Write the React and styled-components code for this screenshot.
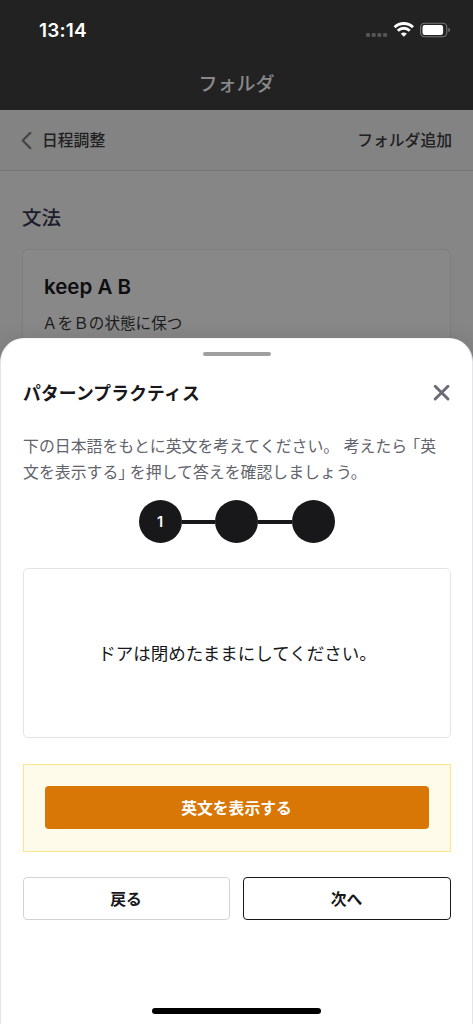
import React from 'react';
import styled, { createGlobalStyle } from 'styled-components';

const steps = [1, 2, 3];
const currentStep = 1;

const GlobalStyle = createGlobalStyle`
  * {
    box-sizing: border-box;
  }

  body {
    margin: 0;
    background: #868686;
    color: #18181b;
    font-family: Inter, "Noto Sans CJK JP", sans-serif;
  }
`;

const Screen = styled.div`
  position: relative;
  height: 1024px;
  overflow: hidden;
`;

const TopBar = styled.header`
  height: 110px;
  background: #222;
`;

const StatusBar = styled.div`
  display: flex;
  align-items: center;
  justify-content: space-between;
  height: 60px;
  padding: 0 21px 0 39px;
`;

const Time = styled.span`
  padding-top: 2px;
  color: #fff;
  font-size: 19px;
  font-weight: 600;
  line-height: 24px;
  letter-spacing: 0.2px;
`;

const Title = styled.h1`
  margin: 12px 0 0;
  color: #898989;
  font-size: 19px;
  font-weight: 500;
  line-height: 26px;
  text-align: center;
`;

const Nav = styled.nav`
  display: flex;
  align-items: center;
  justify-content: space-between;
  height: 61px;
  padding: 2px 21px 0;
  background: #838383;
  border-bottom: 1px solid #777;
`;

const NavButton = styled.a`
  display: flex;
  align-items: center;
  gap: 10px;
  color: #202022;
  font-size: 15.8px;
  font-weight: 500;
  line-height: 24px;
`;

const Content = styled.main`
  padding: 34px 22px 0;
`;

const SectionTitle = styled.h2`
  margin: 0 0 18px;
  color: #1c1c2b;
  font-size: 19.5px;
  font-weight: 500;
  line-height: 26px;
`;

const PhraseCard = styled.div`
  height: 160px;
  padding: 24px 21px;
  background: #888;
  border: 1px solid #7e7e7e;
  border-radius: 6px;
`;

const Phrase = styled.div`
  color: #0e0e10;
  font-size: 20.5px;
  font-weight: 600;
  line-height: 26px;
`;

const Meaning = styled.div`
  margin: 10px 0 0 -2px;
  color: #1d1d1f;
  font-family: "Noto Sans CJK JP", sans-serif;
  font-size: 15.6px;
  line-height: 24px;
`;

const Sheet = styled.section`
  position: absolute;
  left: 0;
  right: 0;
  bottom: 0;
  height: 686px;
  padding: 13px 21px 0 22px;
  background: #fff;
  border: 1px solid #e4e4e7;
  border-top-color: #f4f4f5;
  border-bottom: 0;
  border-radius: 24px 24px 0 0;
  box-shadow: 0 0 20px rgba(0, 0, 0, 0.12);
`;

const Handle = styled.div`
  width: 68px;
  height: 4px;
  margin: 0 auto;
  background: #a0a0a0;
  border-radius: 2px;
`;

const SheetHeader = styled.div`
  display: flex;
  align-items: center;
  justify-content: space-between;
  height: 26px;
  margin-top: 24px;
`;

const SheetTitle = styled.h3`
  margin: 2px 0 0;
  font-size: 17.8px;
  font-weight: 700;
  line-height: 26px;
  letter-spacing: 0.15px;
`;

const Description = styled.p`
  margin: 28px 0 0;
  color: #63636b;
  font-size: 15.9px;
  line-height: 25.5px;
  white-space: nowrap;
`;

/* half-width bracket with a little air on its outer side */
const Bracket = styled.span`
  margin-left: ${(props) => (props.$open ? '5px' : '0')};
  margin-right: ${(props) => (props.$open ? '0' : '3.5px')};
  font-feature-settings: "halt";
`;

const Stepper = styled.div`
  display: flex;
  align-items: center;
  justify-content: center;
  margin-top: 15px;
  padding-right: 1px;
`;

const Step = styled.div`
  display: flex;
  align-items: center;
  justify-content: center;
  width: 43px;
  height: 43px;
  color: #fff;
  background: #18181b;
  border-radius: 50%;
  font-size: 14.5px;
  font-weight: 600;
`;

const StepLine = styled.div`
  width: 33.5px;
  height: 4px;
  background: #18181b;
`;

const QuestionBox = styled.div`
  display: flex;
  align-items: center;
  justify-content: center;
  height: 170px;
  margin-top: 25px;
  padding: 0 0 1px 1px;
  border: 1px solid #e4e4e7;
  border-radius: 5px;
  font-size: 17.5px;
`;

const AnswerPanel = styled.div`
  height: 88px;
  margin-top: 26px;
  padding: 21px;
  background: #fffbeb;
  border: 1px solid #fde68a;
`;

const Button = styled.button`
  width: 100%;
  height: 43px;
  padding: 0 1px 0 0;
  color: ${(props) => props.$color || '#18181b'};
  background: ${(props) => props.$background || '#fff'};
  border: ${(props) => (props.$border ? `1px solid ${props.$border}` : '0')};
  border-radius: 4px;
  font-family: inherit;
  font-size: 15.8px;
  font-weight: 700;
`;

const Actions = styled.div`
  display: grid;
  grid-template-columns: 207px 1fr;
  gap: 13px;
  margin-top: 25px;
`;

const HomeIndicator = styled.div`
  position: absolute;
  bottom: 10px;
  left: 151px;
  width: 169px;
  height: 6px;
  background: #000;
  border-radius: 3px;
`;

const StatusIcons = () => (
  <svg width="86" height="18" viewBox="0 0 86 18" fill="none">
    <g fill="#555">
      <rect x="0" y="12" width="4" height="4" rx="1.3" />
      <rect x="5.7" y="12" width="4" height="4" rx="1.3" />
      <rect x="11.4" y="12" width="4" height="4" rx="1.3" />
      <rect x="17.1" y="12" width="4" height="4" rx="1.3" />
    </g>
    <g stroke="#fff" strokeWidth="2.9">
      <path d="M28.6 6.2C33.9 1.3 41.7 1.3 47 6.2" />
      <path d="M31.8 9.7C35.3 6.5 40.3 6.5 43.8 9.7" />
    </g>
    <path d="M34.8 12.7C36.5 11.2 39.1 11.2 40.8 12.7L37.8 15.7Z" fill="#fff" />
    <rect x="54.6" y="2.2" width="26.2" height="13.6" rx="4" stroke="#777" strokeWidth="1.1" />
    <rect x="56.5" y="4.1" width="20.6" height="9.9" rx="2.3" fill="#fff" />
    <path d="M82.4 6.7C84.6 7.5 84.6 10.3 82.4 11.1Z" fill="#777" />
  </svg>
);

const BackIcon = () => (
  <svg width="11" height="18" viewBox="0 0 11 18" fill="none">
    <path d="M9.3 0.9L1.7 8.5L9.3 16.1" stroke="#464649" strokeWidth="2.2" strokeLinecap="round" strokeLinejoin="round" />
  </svg>
);

const CloseIcon = () => (
  <svg width="18" height="18" viewBox="0 0 18 18" fill="none">
    <path d="M2.2 2.2L15 15M15 2.2L2.2 15" stroke="#6b6b76" strokeWidth="2.9" strokeLinecap="round" />
  </svg>
);

const App = () => (
  <Screen>
    <GlobalStyle />
    <TopBar>
      <StatusBar>
        <Time>13:14</Time>
        <StatusIcons />
      </StatusBar>
      <Title>フォルダ</Title>
    </TopBar>
    <Nav>
      <NavButton>
        <BackIcon />
        日程調整
      </NavButton>
      <NavButton>フォルダ追加</NavButton>
    </Nav>
    <Content>
      <SectionTitle>文法</SectionTitle>
      <PhraseCard>
        <Phrase>keep A B</Phrase>
        <Meaning>ＡをＢの状態に保つ</Meaning>
      </PhraseCard>
    </Content>

    <Sheet>
      <Handle />
      <SheetHeader>
        <SheetTitle>パターンプラクティス</SheetTitle>
        <CloseIcon />
      </SheetHeader>
      <Description>
        下の日本語をもとに英文を考えてください。 考えたら<Bracket $open>「</Bracket>英
        <br />
        文を表示する<Bracket>」</Bracket>を押して答えを確認しましょう。
      </Description>
      <Stepper>
        {steps.map((step) => (
          <React.Fragment key={step}>
            {step > 1 && <StepLine />}
            <Step>{step === currentStep && step}</Step>
          </React.Fragment>
        ))}
      </Stepper>
      <QuestionBox>ドアは閉めたままにしてください。</QuestionBox>
      <AnswerPanel>
        <Button $color="#fff" $background="#d97706">英文を表示する</Button>
      </AnswerPanel>
      <Actions>
        <Button $border="#d4d4d8">戻る</Button>
        <Button $border="#18181b">次へ</Button>
      </Actions>
      <HomeIndicator />
    </Sheet>
  </Screen>
);

export default App;
